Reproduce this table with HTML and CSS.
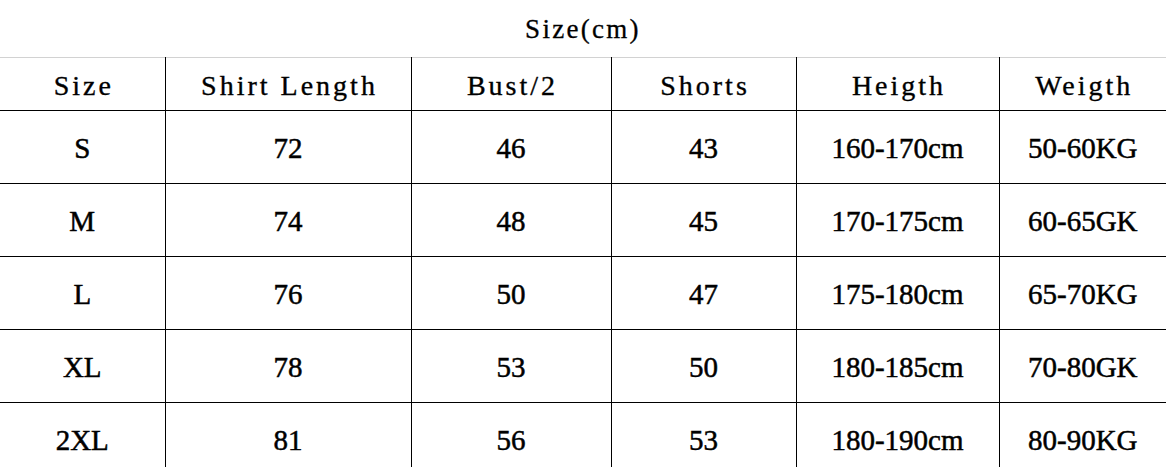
FILE: index.html
```html
<!DOCTYPE html>
<html lang="en">
<head>
<meta charset="utf-8">
<title>Size chart</title>
<link rel="stylesheet" href="styles.css">
</head>
<body>
<div class="title">Size(cm)</div>
<table class="chart">
  <colgroup>
    <col class="c1"><col class="c2"><col class="c3"><col class="c4"><col class="c5"><col class="c6">
  </colgroup>
  <thead>
    <tr>
      <th>Size</th><th>Shirt Length</th><th>Bust/2</th><th>Shorts</th><th>Heigth</th><th>Weigth</th>
    </tr>
  </thead>
  <tbody>
    <tr><td>S</td><td>72</td><td>46</td><td>43</td><td>160-170cm</td><td>50-60KG</td></tr>
    <tr><td>M</td><td>74</td><td>48</td><td>45</td><td>170-175cm</td><td>60-65GK</td></tr>
    <tr><td>L</td><td>76</td><td>50</td><td>47</td><td>175-180cm</td><td>65-70KG</td></tr>
    <tr><td>XL</td><td>78</td><td>53</td><td>50</td><td>180-185cm</td><td>70-80GK</td></tr>
    <tr><td>2XL</td><td>81</td><td>56</td><td>53</td><td>180-190cm</td><td>80-90KG</td></tr>
  </tbody>
</table>
</body>
</html>
```
FILE: styles.css
```css
html, body {
  margin: 0;
  padding: 0;
  background: #ffffff;
  overflow: hidden;
}
body {
  font-family: "Liberation Serif", "Times New Roman", serif;
  color: #000000;
}
.title {
  height: 57px;
  display: flex;
  align-items: center;
  justify-content: center;
  font-size: 27px;
  letter-spacing: 2.3px;
  padding-top: 2px;
  box-sizing: border-box;
  -webkit-text-stroke: 0.3px #000;
}
.chart {
  width: 1166px;
  table-layout: fixed;
  border-collapse: collapse;
  border-top: 1px solid #d2d2d2;
}
.c1 { width: 165px; }
.c2 { width: 246px; }
.c3 { width: 200px; }
.c4 { width: 185px; }
.c5 { width: 203px; }
.c6 { width: 167px; }
.chart th,
.chart td {
  padding: 0;
  text-align: center;
  vertical-align: middle;
  border-left: 1px solid #000;
  border-bottom: 1px solid #000;
  white-space: nowrap;
}
.chart th:first-child,
.chart td:first-child {
  border-left: none;
}
.chart th {
  height: 53px;
  font-size: 28px;
  font-weight: normal;
  letter-spacing: 3px;
  padding-left: 3px;
  padding-top: 4px;
  box-sizing: border-box;
  -webkit-text-stroke: 0.35px #000;
}
.chart td {
  height: 73px;
  font-size: 29px;
  -webkit-text-stroke: 0.5px #000;
  padding-top: 3px;
  box-sizing: border-box;
}
```
